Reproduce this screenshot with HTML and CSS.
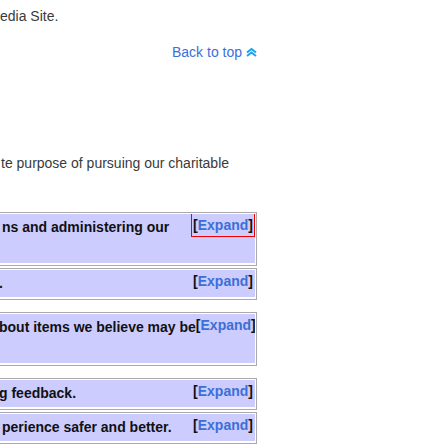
FILE: index.html
```html
<!DOCTYPE html>
<html>
<head>
<meta charset="utf-8">
<link rel="stylesheet" href="styles.css">
</head>
<body>
<div class="page">
  <p class="para first">edia Site.</p>
  <div class="backtop"><a href="#" class="backlink">Back to top</a>
    <svg class="chev" width="11" height="9" viewBox="0 0 11 9"><path d="M1 4.5 L5.5 1 L10 4.5 M1 8 L5.5 4.5 L10 8" fill="none" stroke="#1aa3ee" stroke-width="2"/></svg>
  </div>
  <p class="para second">te purpose of pursuing our charitable</p>

  <div class="list">
    <div class="box">
      <div class="head tall">
        <span class="title">ns and administering our</span>
        <span class="toggle focused">[<a href="#">Expand</a>]</span>
      </div>
    </div>
    <div class="box">
      <div class="head">
        <span class="title cut">.</span>
        <span class="toggle">[<a href="#">Expand</a>]</span>
      </div>
    </div>
    <div class="box spaced">
      <div class="head tall">
        <span class="title cut">bout items we believe may be</span>
        <span class="toggle tight">[<a href="#">Expand</a>]</span>
      </div>
    </div>
    <div class="box spaced">
      <div class="head">
        <span class="title cut">g feedback.</span>
        <span class="toggle">[<a href="#">Expand</a>]</span>
      </div>
    </div>
    <div class="box">
      <div class="head">
        <span class="title">perience safer and better.</span>
        <span class="toggle">[<a href="#">Expand</a>]</span>
      </div>
    </div>
  </div>
</div>
</body>
</html>
```

FILE: styles.css
```css
html, body {
  margin: 0;
  padding: 0;
  background: #fff;
}
.page {
  font-family: "Liberation Sans", Arial, sans-serif;
  font-size: 14px;
  color: #3a3a3a;
  overflow: hidden;
  height: 448px;
}
.para {
  margin: 0;
  line-height: 16px;
}
.first {
  padding-top: 8px;
}
.second {
  margin-top: 95px;
  text-indent: 1px;
}
.backtop {
  margin-top: 20px;
  padding-left: 172px;
  display: flex;
  align-items: center;
  gap: 4px;
  line-height: 16px;
}
.backlink {
  color: #3b6fd8;
  text-decoration: none;
}
.chev {
  display: block;
}
.list {
  margin-top: 41px;
  margin-left: -10px;
  width: 267px;
}
.box {
  border: 1px solid #aaa;
  padding: 1px 1px 2px 1px;
  margin-bottom: 2px;
}
.box.spaced {
  margin-top: 12px;
}
.head {
  background: #ccccff;
  display: flex;
  justify-content: space-between;
  align-items: flex-start;
  padding: 2px 1px 3px 10px;
  font-weight: bold;
  color: #111;
  line-height: 22px;
  height: 22px;
  overflow: hidden;
}
.head.tall {
  height: 44px;
}
.title {
  white-space: nowrap;
}
.title.cut {
  margin-left: -3px;
}
.toggle {
  line-height: 18px;
  padding: 0 1px;
  white-space: nowrap;
}
.toggle.tight {
  padding: 0;
}
.toggle a {
  color: #3b6fd8;
  text-decoration: none;
}
.toggle.focused {
  outline: 1px solid #e00;
  padding: 2px 1px;
  margin-top: -2px;
}
```
